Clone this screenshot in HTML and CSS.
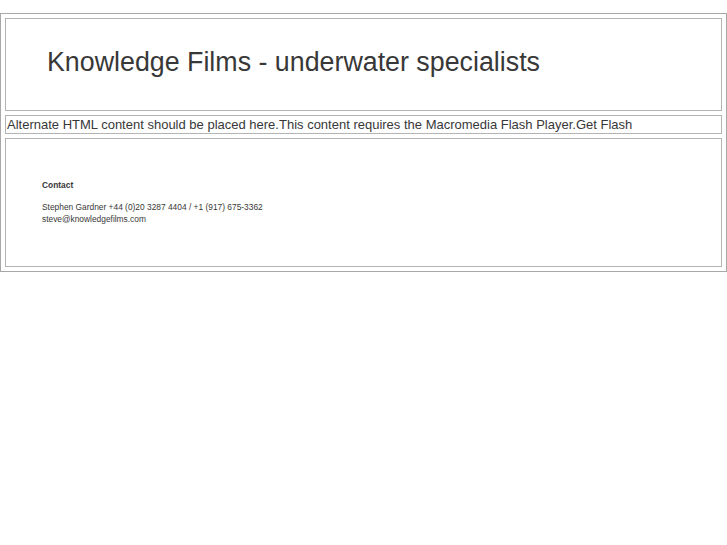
FILE: index.html
```html
<!DOCTYPE html>
<html>
<head>
<meta charset="utf-8">
<title>Knowledge Films - underwater specialists</title>
<link rel="stylesheet" href="styles.css">
</head>
<body>
<table class="frame">
  <tr>
    <td class="header"><h1 class="title">Knowledge Films - underwater specialists</h1></td>
  </tr>
  <tr>
    <td class="flash">Alternate HTML content should be placed here.This content requires the Macromedia Flash Player.<a class="getflash" href="#">Get Flash</a></td>
  </tr>
  <tr>
    <td class="contact">
      <div class="contact-inner">
        <p class="contact-title">Contact</p>
        <p class="contact-text">Stephen Gardner +44 (0)20 3287 4404 / +1 (917) 675-3362<br>steve@knowledgefilms.com</p>
      </div>
    </td>
  </tr>
</table>
</body>
</html>
```

FILE: styles.css
```css
html, body {
  margin: 0;
  padding: 0;
  background: #fff;
}
body {
  padding-top: 13px;
  font-family: "Liberation Sans", Arial, sans-serif;
  color: #383838;
}
.frame {
  width: 727px;
  border: 1px solid #a8a8a8;
  border-spacing: 4px;
}
.frame td {
  border: 1px solid #b4b4b4;
  padding: 0;
}
.header {
  height: 91px;
}
.title {
  margin: 0 0 5px 41px;
  font-size: 26.8px;
  font-weight: normal;
  color: #383838;
}
.flash {
  height: 17px;
  font-size: 13px;
  padding-left: 1px !important;
}
.getflash {
  color: #383838;
  text-decoration: none;
}
.contact {
  height: 127px;
  vertical-align: top;
}
.contact-inner {
  padding: 41px 0 0 36px;
}
.contact-title {
  margin: 0 0 11px;
  font-size: 8.4px;
  font-weight: bold;
}
.contact-text {
  margin: 0;
  font-size: 8.4px;
  line-height: 12px;
}
```
